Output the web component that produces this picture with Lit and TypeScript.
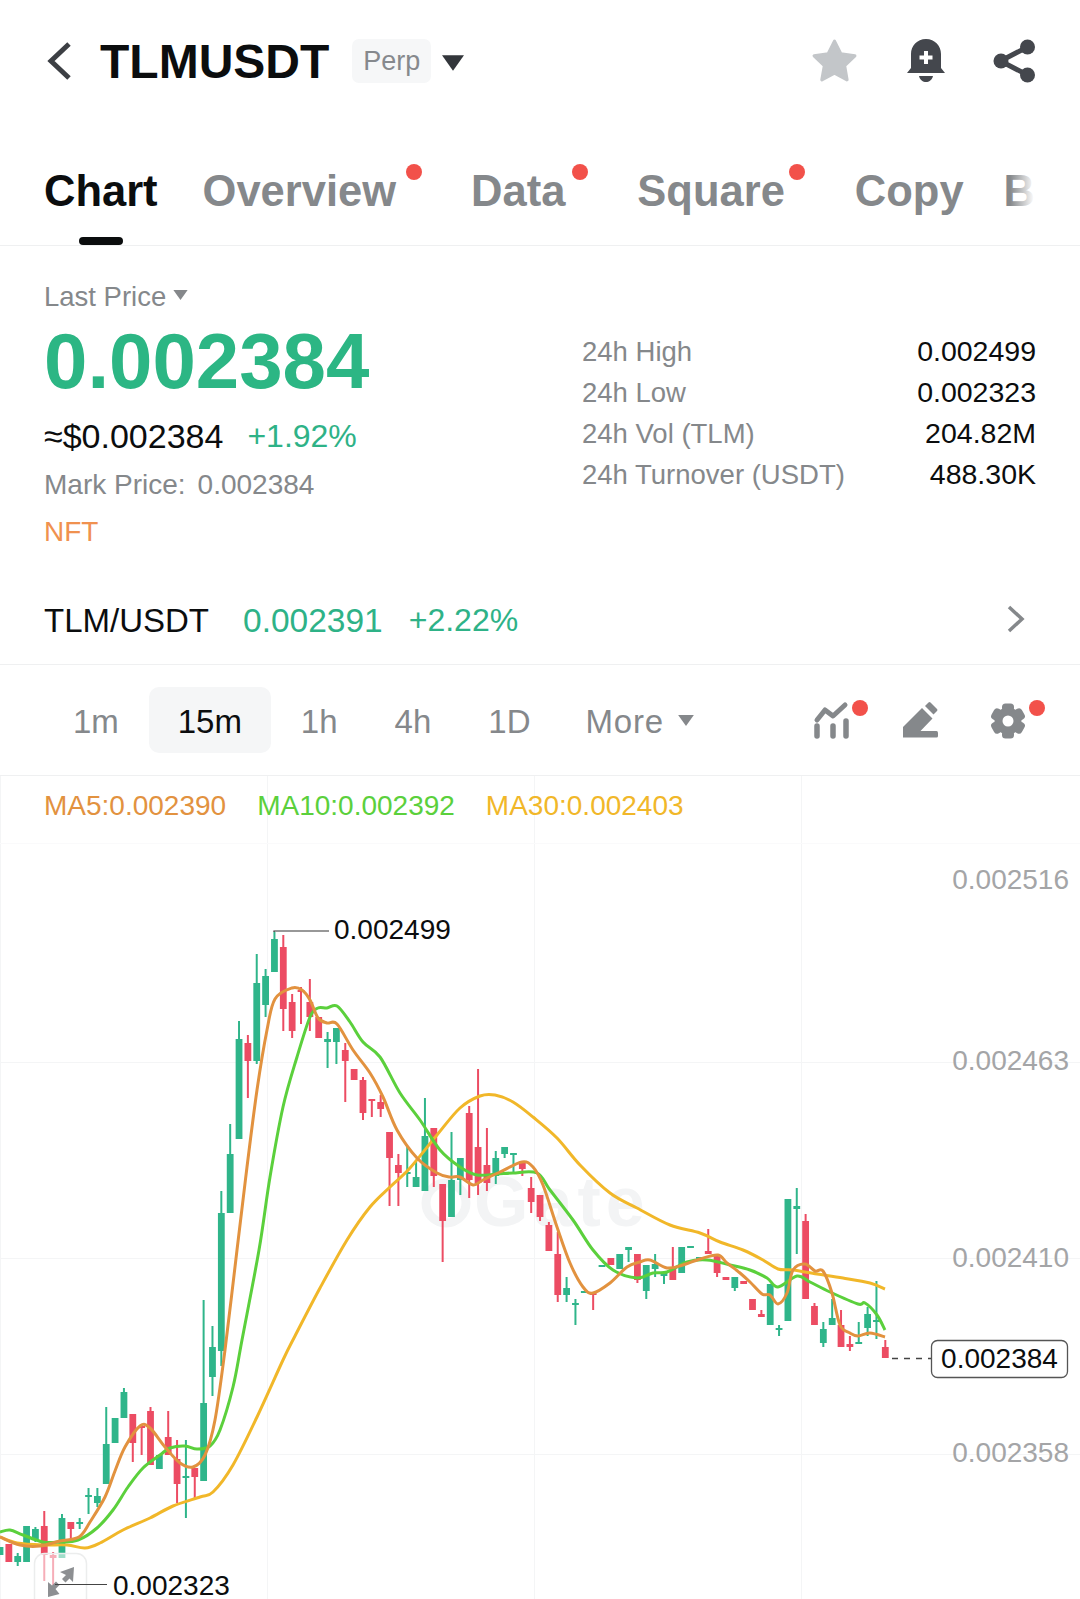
import { LitElement, css, html, svg } from 'lit';
import { customElement } from 'lit/decorators.js';

type Candle = [string, number, number, number, number];

// color, wick top, body top, body bottom, wick bottom (page px)
const CANDLES: Candle[] = [
	['g', 1547, 1547, 1555, 1555], ['r', 1544, 1544, 1562, 1562], ['g', 1553, 1556, 1562, 1566], ['g', 1526, 1526, 1562, 1562],
	['g', 1527, 1529, 1540, 1542], ['r', 1511, 1526, 1555, 1581], ['r', 1552, 1555, 1558, 1585], ['g', 1514, 1518, 1558, 1558],
	['r', 1522, 1522, 1529, 1540], ['g', 1518, 1522, 1523, 1529], ['g', 1488, 1495, 1496, 1514], ['g', 1488, 1496, 1503, 1507],
	['g', 1407, 1444, 1484, 1484], ['g', 1418, 1418, 1443, 1443], ['g', 1388, 1392, 1418, 1418], ['r', 1414, 1414, 1443, 1462],
	['r', 1426, 1426, 1427, 1455], ['r', 1407, 1411, 1465, 1465], ['g', 1455, 1455, 1469, 1469], ['r', 1411, 1437, 1455, 1455],
	['r', 1440, 1459, 1484, 1503], ['g', 1440, 1476, 1477, 1518], ['r', 1468, 1468, 1477, 1498], ['g', 1300, 1403, 1481, 1481],
	['g', 1326, 1347, 1377, 1396], ['g', 1191, 1213, 1351, 1366], ['g', 1124, 1154, 1213, 1213], ['g', 1021, 1039, 1139, 1139],
	['r', 1035, 1043, 1061, 1098], ['g', 954, 983, 1061, 1064], ['g', 969, 976, 1005, 1017], ['g', 932, 939, 972, 972],
	['r', 935, 947, 1009, 1031], ['r', 994, 1002, 1031, 1038], ['r', 987, 990, 992, 1024], ['r', 979, 1002, 1017, 1031],
	['r', 1017, 1017, 1038, 1038], ['g', 1032, 1039, 1042, 1068], ['g', 1028, 1028, 1042, 1064], ['r', 1043, 1050, 1061, 1102],
	['r', 1069, 1069, 1080, 1080], ['r', 1077, 1080, 1113, 1120], ['r', 1099, 1099, 1101, 1117], ['r', 1095, 1102, 1109, 1117],
	['r', 1132, 1132, 1158, 1206], ['r', 1154, 1165, 1173, 1206], ['g', 1147, 1172, 1174, 1187], ['g', 1162, 1177, 1187, 1187],
	['g', 1098, 1136, 1191, 1191], ['r', 1128, 1128, 1176, 1187], ['r', 1184, 1184, 1221, 1262], ['g', 1132, 1180, 1217, 1217],
	['g', 1158, 1158, 1180, 1195], ['r', 1106, 1113, 1180, 1198], ['r', 1069, 1147, 1183, 1195], ['r', 1128, 1165, 1183, 1191],
	['g', 1151, 1158, 1176, 1184], ['g', 1147, 1147, 1154, 1158], ['g', 1153, 1153, 1155, 1172], ['r', 1163, 1163, 1169, 1176],
	['r', 1177, 1188, 1202, 1213], ['r', 1195, 1195, 1217, 1221], ['r', 1222, 1225, 1251, 1251], ['r', 1232, 1254, 1295, 1302],
	['g', 1277, 1288, 1295, 1302], ['g', 1299, 1303, 1305, 1325], ['g', 1291, 1291, 1292, 1292], ['r', 1293, 1293, 1295, 1310],
	['g', 1265, 1265, 1266, 1266], ['r', 1258, 1258, 1265, 1265], ['g', 1254, 1254, 1269, 1269], ['g', 1247, 1247, 1250, 1262],
	['r', 1254, 1254, 1280, 1283], ['g', 1265, 1265, 1291, 1299], ['g', 1254, 1264, 1269, 1277], ['g', 1273, 1273, 1276, 1284],
	['r', 1247, 1267, 1280, 1280], ['g', 1247, 1247, 1273, 1273], ['g', 1246, 1246, 1248, 1248], ['g', 1257, 1257, 1259, 1259],
	['r', 1229, 1251, 1254, 1254], ['r', 1255, 1255, 1273, 1277], ['r', 1277, 1277, 1280, 1280], ['g', 1277, 1277, 1288, 1291],
	['r', 1281, 1281, 1284, 1284], ['r', 1299, 1299, 1310, 1310], ['r', 1310, 1314, 1317, 1317], ['g', 1284, 1284, 1325, 1325],
	['g', 1325, 1328, 1329, 1336], ['g', 1199, 1199, 1321, 1321], ['g', 1188, 1206, 1209, 1254], ['r', 1214, 1221, 1299, 1299],
	['r', 1303, 1306, 1325, 1325], ['g', 1322, 1329, 1343, 1347], ['g', 1299, 1318, 1325, 1325], ['r', 1310, 1325, 1347, 1347],
	['r', 1336, 1344, 1347, 1351], ['g', 1322, 1342, 1344, 1344], ['g', 1307, 1314, 1328, 1336], ['g', 1281, 1320, 1322, 1339],
	['r', 1340, 1347, 1358, 1358],
];

const MA5 = [[0, 1537], [20, 1545], [40, 1546], [60, 1541], [79, 1537], [90, 1522], [105, 1497], [115, 1471], [125, 1447], [140, 1426], [150, 1428], [165, 1447], [180, 1463], [193, 1467], [205, 1455], [215, 1420], [225, 1350], [237, 1250], [247, 1167], [257, 1090], [267, 1030], [275, 999], [292, 988], [302, 990], [310, 1000], [318, 1018], [327, 1023], [337, 1024], [353, 1050], [370, 1073], [383, 1097], [397, 1130], [417, 1158], [437, 1173], [450, 1177], [460, 1177], [473, 1185], [483, 1180], [500, 1172], [522, 1162], [533, 1167], [543, 1185], [557, 1227], [570, 1263], [583, 1287], [593, 1293], [610, 1283], [627, 1267], [640, 1262], [650, 1260], [667, 1268], [683, 1265], [700, 1259], [718, 1255], [727, 1263], [740, 1273], [750, 1282], [762, 1294], [770, 1295], [778, 1304], [787, 1293], [793, 1270], [805, 1264], [815, 1271], [823, 1271], [832, 1293], [840, 1325], [850, 1333], [858, 1336], [870, 1333], [885, 1337]];
const MA10 = [[0, 1532], [10, 1530], [23, 1535], [43, 1542], [60, 1542], [78, 1540], [97, 1528], [113, 1510], [128, 1487], [143, 1468], [160, 1455], [170, 1448], [185, 1446], [197, 1449], [210, 1446], [220, 1430], [233, 1387], [242, 1340], [259, 1250], [270, 1177], [283, 1107], [297, 1057], [310, 1017], [318, 1008], [327, 1008], [337, 1006], [350, 1022], [363, 1042], [380, 1057], [400, 1093], [420, 1120], [440, 1150], [460, 1167], [477, 1175], [497, 1174], [513, 1173], [537, 1173], [550, 1190], [573, 1220], [593, 1250], [613, 1270], [637, 1278], [653, 1273], [667, 1272], [687, 1262], [707, 1260], [730, 1265], [750, 1270], [767, 1278], [778, 1287], [797, 1276], [810, 1282], [830, 1292], [858, 1304], [865, 1303], [877, 1315], [885, 1330]];
const MA30 = [[0, 1537], [17, 1543], [43, 1545], [67, 1545], [85, 1548], [100, 1543], [123, 1530], [150, 1518], [173, 1506], [200, 1497], [213, 1492], [233, 1465], [257, 1417], [283, 1360], [295, 1336], [320, 1288], [347, 1240], [370, 1207], [390, 1187], [410, 1168], [437, 1135], [460, 1108], [480, 1096], [495, 1095], [513, 1102], [533, 1117], [557, 1138], [580, 1165], [610, 1193], [637, 1208], [670, 1225], [700, 1233], [720, 1242], [743, 1250], [763, 1260], [778, 1269], [793, 1270], [817, 1274], [843, 1278], [870, 1283], [885, 1289]];

const smooth = (pts: number[][]) => {
	let d = `M${pts[0][0]} ${pts[0][1]}`;
	for (let i = 0; i < pts.length - 1; i++) {
		const p0 = pts[Math.max(i - 1, 0)];
		const p1 = pts[i];
		const p2 = pts[i + 1];
		const p3 = pts[Math.min(i + 2, pts.length - 1)];
		const c1x = p1[0] + (p2[0] - p0[0]) / 6;
		const c1y = p1[1] + (p2[1] - p0[1]) / 6;
		const c2x = p2[0] - (p3[0] - p1[0]) / 6;
		const c2y = p2[1] - (p3[1] - p1[1]) / 6;
		d += `C${c1x.toFixed(1)} ${c1y.toFixed(1)} ${c2x.toFixed(1)} ${c2y.toFixed(1)} ${p2[0]} ${p2[1]}`;
	}
	return d;
};

const TABS = [
	{ name: 'Chart', gap: 0, active: true },
	{ name: 'Overview', gap: 45, dot: -26 },
	{ name: 'Data', gap: 75, dot: -23 },
	{ name: 'Square', gap: 72, dot: -20 },
	{ name: 'Copy', gap: 70 },
	{ name: 'B', gap: 40 },
];

const STATS = [
	['24h High', '0.002499'],
	['24h Low', '0.002323'],
	['24h Vol (TLM)', '204.82M'],
	['24h Turnover (USDT)', '488.30K'],
];

const INTERVALS = ['1m', '15m', '1h', '4h', '1D'];

@customElement('app-root')
export class AppRoot extends LitElement {
	static styles = css`
		:host {
			display: block;
			width: 1080px;
			height: 1599px;
			overflow: hidden;
			background: #fff;
			font-family: 'Liberation Sans', sans-serif;
			color: #0b0d0e;
		}
		.header {
			height: 122px;
			display: flex;
			align-items: center;
			padding: 0 44px 0 46px;
			box-sizing: border-box;
		}
		.back {
			width: 26px;
			height: 40px;
			margin-right: 28px;
		}
		.title {
			font-size: 48px;
			font-weight: 700;
		}
		.chip {
			margin-left: 23px;
			width: 79px;
			height: 44px;
			border-radius: 7px;
			background: #f6f7f8;
			color: #86898d;
			font-size: 27px;
			display: flex;
			align-items: center;
			justify-content: center;
		}
		.title-caret {
			margin: 3px 0 0 11px;
			width: 22px;
			height: 16px;
		}
		.actions {
			margin-left: auto;
			display: flex;
			align-items: center;
			gap: 47px;
		}
		.tabs {
			position: relative;
			height: 124px;
			box-sizing: border-box;
			border-bottom: 1px solid #eff0f1;
			display: flex;
			padding: 44px 0 0 44px;
			overflow: hidden;
		}
		.tabs::after {
			content: '';
			position: absolute;
			right: 0;
			top: 0;
			bottom: 1px;
			width: 70px;
			background: linear-gradient(to right, rgba(255, 255, 255, 0), #fff 35%);
		}
		.tab {
			position: relative;
			flex: none;
			height: 50px;
			line-height: 50px;
			font-size: 43.5px;
			font-weight: 700;
			color: #85888b;
		}
		.tab.active {
			color: #0b0d0e;
		}
		.tab.active::after {
			content: '';
			position: absolute;
			left: 35px;
			top: 71px;
			width: 44px;
			height: 8px;
			border-radius: 4px;
			background: #0b0d0e;
		}
		.tab .dot {
			position: absolute;
			top: -2px;
		}
		.dot {
			display: block;
			width: 16px;
			height: 16px;
			border-radius: 50%;
			background: #f2514a;
		}
		.price {
			height: 329px;
			display: flex;
			justify-content: space-between;
			padding: 0 44px;
		}
		.quote {
			padding-top: 34px;
		}
		.label {
			height: 34px;
			line-height: 34px;
			font-size: 28px;
			color: #85888b;
			display: flex;
			align-items: center;
		}
		.label.head {
			font-size: 27.5px;
		}
		.label svg {
			margin-left: 7px;
			margin-bottom: 4px;
		}
		.last {
			margin-top: 7px;
			height: 80px;
			line-height: 80px;
			font-size: 78px;
			font-weight: 700;
			color: #2cb684;
		}
		.fiat {
			margin-top: 15px;
			height: 40px;
			line-height: 40px;
			font-size: 34px;
			display: flex;
			gap: 24px;
		}
		.fiat .up {
			font-size: 32px;
		}
		.up {
			color: #2eb287;
		}
		.mark {
			margin-top: 12px;
			gap: 12px;
		}
		.sector {
			margin-top: 13px;
			color: #f0914f;
		}
		.stats {
			width: 454px;
			padding-top: 85px;
		}
		.stat {
			height: 41px;
			line-height: 41px;
			display: flex;
			justify-content: space-between;
			font-size: 28.5px;
		}
		.stat span:first-child {
			font-size: 27.5px;
			color: #85888b;
		}
		.pair {
			height: 90px;
			box-sizing: border-box;
			border-bottom: 1px solid #eff0f1;
			padding: 2px 54px 0 44px;
			display: flex;
			align-items: center;
			font-size: 33px;
		}
		.pair .num {
			margin-left: 34px;
			font-size: 33.5px;
		}
		.pair .chg {
			margin-left: 26px;
			font-size: 32px;
		}
		.pair svg {
			margin: 0 0 4px auto;
		}
		.intervals {
			height: 111px;
			box-sizing: border-box;
			border-bottom: 1px solid #eff0f1;
			display: flex;
			align-items: center;
			padding: 0 32px 0 73px;
			font-size: 33px;
			color: #85888b;
		}
		.iv {
			flex: none;
			box-sizing: border-box;
			padding-top: 3px;
		}
		.iv.on {
			width: 122px;
			height: 66px;
			margin: 0 30px;
			border-radius: 10px;
			background: #f5f6f7;
			color: #0b0d0e;
			display: flex;
			align-items: center;
			justify-content: center;
		}
		.iv.plain {
			margin-right: 57px;
		}
		.iv.plain:first-child {
			margin-right: 0;
		}
		.more {
			display: flex;
			align-items: center;
			gap: 5px;
			margin-left: -2px;
			padding-top: 3px;
			letter-spacing: 0.8px;
		}
		.more svg {
			margin: 0 0 3px 9px;
		}
		.tools {
			margin-left: auto;
			display: block;
		}
		.chart {
			position: relative;
			height: 823px;
		}
		.chart svg {
			position: absolute;
			left: 0;
			top: 0;
		}
		.ma {
			position: relative;
			display: flex;
			gap: 31px;
			padding: 13px 0 0 44px;
			font-size: 28px;
			line-height: 34px;
		}
		.ma5 {
			color: #e2923f;
		}
		.ma10 {
			color: #5bd03c;
		}
		.ma30 {
			color: #f1b729;
		}
		text {
			font-family: 'Liberation Sans', sans-serif;
			font-size: 28px;
		}
		.axis {
			fill: #a4a5a7;
			text-anchor: end;
		}
		.tag {
			fill: #0b0d0e;
		}
		.mark-wm {
			font-size: 70px;
			font-weight: 700;
			letter-spacing: 5px;
			fill: #f3f4f5;
		}
	`;

	renderStar() {
		return html`<svg width="49" height="46" viewBox="0 0 46 44">
			<path d="M23 3l6 12 13.500 2-9.800 9.500 2.300 13.500L23 33.600 10.900 40l2.400-13.500-9.800-9.500 13.500-2z" fill="#c3c6c9" stroke="#c3c6c9" stroke-width="3" stroke-linejoin="round" />
		</svg>`;
	}

	renderBell() {
		return html`<svg width="40" height="44" viewBox="0 0 38 44">
			<path d="M19 0C10 0 4 7 4 15v14L0 34h38l-4-5V15C34 7 28 0 19 0z" fill="#44474d" />
			<path d="M12 37h14c-1 4-4 6-7 6s-6-2-7-6z" fill="#44474d" />
			<path d="M19 12v13M12.500 18.500h13" stroke="#fff" stroke-width="4" />
		</svg>`;
	}

	renderShare() {
		return html`<svg width="43" height="44" viewBox="0 0 42 44">
			<path d="M34 8L7 22l27 14" fill="none" stroke="#44474d" stroke-width="5" />
			<circle cx="34" cy="8" r="7.500" fill="#44474d" />
			<circle cx="7.500" cy="22" r="7.500" fill="#44474d" />
			<circle cx="34" cy="36" r="7.500" fill="#44474d" />
		</svg>`;
	}

	renderCaret(w: number, h: number, color: string) {
		return html`<svg width=${w} height=${h} viewBox="0 0 20 14"><path d="M0 0h20L10 14z" fill=${color} /></svg>`;
	}

	renderTools() {
		// page x 810..1048, page y 696..744
		const gearTeeth = [0, 60, 120, 180, 240, 300];
		return html`<svg class="tools" width="238" height="48" viewBox="810 696 238 48">
			<path d="M817 720l8-10 8 6 12-11" fill="none" stroke="#85888b" stroke-width="5" stroke-linecap="round" stroke-linejoin="round" />
			<path d="M817 726v10M833 726v10M846 721v15" stroke="#85888b" stroke-width="5.500" stroke-linecap="round" />
			<circle cx="860" cy="708" r="8" fill="#f2514a" />
			<path d="M903 727l19-19 10.500 10.500-12 12.500h16q1.500 0 1.500 2v3q0 1.500-1.500 1.500h-33.500z" fill="#85888b" />
			<path d="M925 706l3.500-3.500q1-1 2 0l6.500 6.500q1 1 0 2l-3.500 3.500z" fill="#85888b" />
			<g fill="#85888b">
				<circle cx="1008" cy="721" r="13.500" />
				${gearTeeth.map((a) => svg`<rect x="1002" y="703.500" width="12" height="8" rx="3.500" transform="rotate(${a} 1008 721)" />`)}
			</g>
			<circle cx="1008" cy="721" r="5.500" fill="#fff" />
			<circle cx="1037" cy="708" r="8" fill="#f2514a" />
		</svg>`;
	}

	renderChart() {
		const xs = [0, 267, 534, 801];
		const ys = [1062, 1258, 1454];
		const labels = [
			['0.002516', 889],
			['0.002463', 1070],
			['0.002410', 1267],
			['0.002358', 1462],
		];
		return html`<svg width="1080" height="823" viewBox="0 776 1080 823">
			${xs.map((x) => svg`<line x1=${x + 0.5} x2=${x + 0.5} y1="776" y2="1599" stroke="#f4f5f6" />`)}
			<line x1="0" x2="1080" y1="843.500" y2="843.500" stroke="#fafafb" />
			${ys.map((y) => svg`<line x1="0" x2="1080" y1=${y + 0.5} y2=${y + 0.5} stroke="#f4f5f6" />`)}
			<circle cx="446" cy="1203" r="20" fill="none" stroke="#f3f4f5" stroke-width="9" />
			<text class="mark-wm" x="474" y="1226">Gate</text>
			${labels.map(([t, y]) => svg`<text class="axis" x="1069" y=${y}>${t}</text>`)}
			${CANDLES.map((c, i) => {
				const x = 8.853 * i;
				const color = c[0] === 'g' ? '#2fb58a' : '#ec4c63';
				return svg`<line x1=${x} x2=${x} y1=${c[1]} y2=${c[4]} stroke=${color} stroke-width="2" />
					<rect x=${x - 3.4} y=${c[2]} width="6.800" height=${Math.max(c[3] - c[2], 2)} fill=${color} />`;
			})}
			<path d=${smooth(MA30)} fill="none" stroke="#f1b729" stroke-width="3" stroke-linejoin="round" />
			<path d=${smooth(MA10)} fill="none" stroke="#5bd03c" stroke-width="3" stroke-linejoin="round" />
			<path d=${smooth(MA5)} fill="none" stroke="#e2923f" stroke-width="3" stroke-linejoin="round" />

			<path d="M274 932v-1h55" fill="none" stroke="#333" stroke-width="1.200" />
			<text class="tag" x="334" y="939">0.002499</text>

			<path d="M892 1358.500h39" stroke="#444" stroke-width="1.300" stroke-dasharray="6 6" />
			<rect x="931.500" y="1340.500" width="136" height="37" rx="6" fill="#fff" stroke="#555" stroke-width="1.300" />
			<text class="tag" x="999.500" y="1368" text-anchor="middle">0.002384</text>

			<rect x="34.500" y="1553.500" width="52" height="60" rx="10" fill="#fff" fill-opacity="0.55" stroke="#eceded" stroke-width="1.500" />
			<path d="M60 1572l14-5-1 15-3.500-3.500-4 4-3.500-3.500 4-4z" fill="#8d8f92" />
			<path d="M48 1597v-15l4 3.500 4-4 3.500 3.500-4 4 4 5z" fill="#8d8f92" />
			<path d="M55 1584.500h52" stroke="#444" stroke-width="1.200" />
			<text class="tag" x="113" y="1595">0.002323</text>
		</svg>`;
	}

	render() {
		return html`
			<div class="header">
				<svg class="back" viewBox="0 0 26 40"><path d="M23 3L5 20l18 17" fill="none" stroke="#3c3f44" stroke-width="5" /></svg>
				<div class="title">TLMUSDT</div>
				<div class="chip">Perp</div>
				<div class="title-caret">${this.renderCaret(22, 16, '#33363b')}</div>
				<div class="actions">${this.renderStar()}${this.renderBell()}${this.renderShare()}</div>
			</div>
			<div class="tabs">
				${TABS.map(
					(t) => html`<div class="tab ${t.active ? 'active' : ''}" style="margin-left:${t.gap}px">
						${t.name}${t.dot ? html`<i class="dot" style="right:${t.dot}px"></i>` : ''}
					</div>`,
				)}
			</div>
			<div class="price">
				<div class="quote">
					<div class="label head">Last Price ${this.renderCaret(15, 10, '#85888b')}</div>
					<div class="last">0.002384</div>
					<div class="fiat"><span>≈$0.002384</span><span class="up">+1.92%</span></div>
					<div class="label mark"><span>Mark Price:</span><span>0.002384</span></div>
					<div class="label sector">NFT</div>
				</div>
				<div class="stats">
					${STATS.map(([k, v]) => html`<div class="stat"><span>${k}</span><span>${v}</span></div>`)}
				</div>
			</div>
			<div class="pair">
				<span>TLM/USDT</span>
				<span class="up num">0.002391</span>
				<span class="up chg">+2.22%</span>
				<svg width="20" height="30" viewBox="0 0 20 30"><path d="M3 3l13 12L3 27" fill="none" stroke="#85888b" stroke-width="3.500" /></svg>
			</div>
			<div class="intervals">
				${INTERVALS.map((t) => html`<div class="iv ${t === '15m' ? 'on' : 'plain'}">${t}</div>`)}
				<div class="more">More ${this.renderCaret(16, 11, '#85888b')}</div>
				${this.renderTools()}
			</div>
			<div class="chart">
				${this.renderChart()}
				<div class="ma">
					<span class="ma5">MA5:0.002390</span>
					<span class="ma10">MA10:0.002392</span>
					<span class="ma30">MA30:0.002403</span>
				</div>
			</div>
		`;
	}
}
